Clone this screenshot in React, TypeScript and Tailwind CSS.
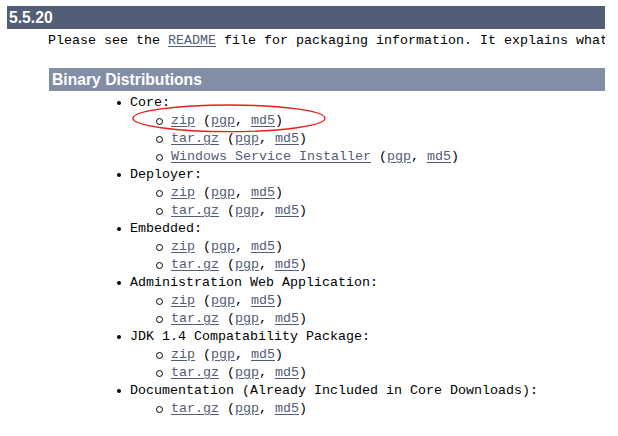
const mono = "font-['Liberation_Mono',monospace] text-[13.33px] leading-[18px]";
const head = "font-['Liberation_Sans',Arial,sans-serif] font-bold text-white text-[15.7px]";

type Sub = { label: string };
type Group = { title: string; subs: Sub[] };

const groups: Group[] = [
  { title: "Core:", subs: [{ label: "zip" }, { label: "tar.gz" }, { label: "Windows Service Installer" }] },
  { title: "Deployer:", subs: [{ label: "zip" }, { label: "tar.gz" }] },
  { title: "Embedded:", subs: [{ label: "zip" }, { label: "tar.gz" }] },
  { title: "Administration Web Application:", subs: [{ label: "zip" }, { label: "tar.gz" }] },
  { title: "JDK 1.4 Compatability Package:", subs: [{ label: "zip" }, { label: "tar.gz" }] },
  { title: "Documentation (Already Included in Core Downloads):", subs: [{ label: "tar.gz" }] },
];

function Link({ children }: { children: React.ReactNode }) {
  return <a href="#" className="text-[#525d76] underline underline-offset-2">{children}</a>;
}

function SubItem({ label }: Sub) {
  return (
    <li className="flex items-center h-[18px] whitespace-pre">
      <span className="w-[7px] h-[7px] rounded-full border border-black mr-[8px]" />
      <Link>{label}</Link>
      <span> (</span>
      <Link>pgp</Link>
      <span>, </span>
      <Link>md5</Link>
      <span>)</span>
    </li>
  );
}

export default function App() {
  return (
    <div className="relative bg-white w-[618px] h-[436px] overflow-hidden pl-[7px] pt-[6px] text-black">
      <div className="w-[598px] overflow-hidden">
        <div className={`h-[23px] bg-[#525d76] pl-[2px] flex items-center ${head}`}>5.5.20</div>
        <p className={`${mono} mt-[3px] pl-[41px] whitespace-nowrap`}>
          Please see the <Link>README</Link> file for packaging information. It explains what you get with each distribution.
        </p>
        <div className="ml-[42px] mt-[18px]">
          <div className={`h-[23px] bg-[#828da6] pl-[3px] flex items-center ${head}`}>Binary Distributions</div>
          <ul className={`${mono} mt-[3px] pl-[68px]`}>
            {groups.map((g) => (
              <li key={g.title}>
                <div className="flex items-center h-[18px] whitespace-pre">
                  <span className="w-[4px] h-[4px] rounded-full bg-black mr-[9px]" />
                  {g.title}
                </div>
                <ul className="pl-[39px]">
                  {g.subs.map((s) => (
                    <SubItem key={s.label} {...s} />
                  ))}
                </ul>
              </li>
            ))}
          </ul>
        </div>
      </div>
      <svg className="absolute left-0 top-0 pointer-events-none" width="618" height="436">
        <ellipse cx="229" cy="118.3" rx="96" ry="13.3" fill="none" stroke="#ee1c1c" strokeWidth="1.4" />
      </svg>
    </div>
  );
}
